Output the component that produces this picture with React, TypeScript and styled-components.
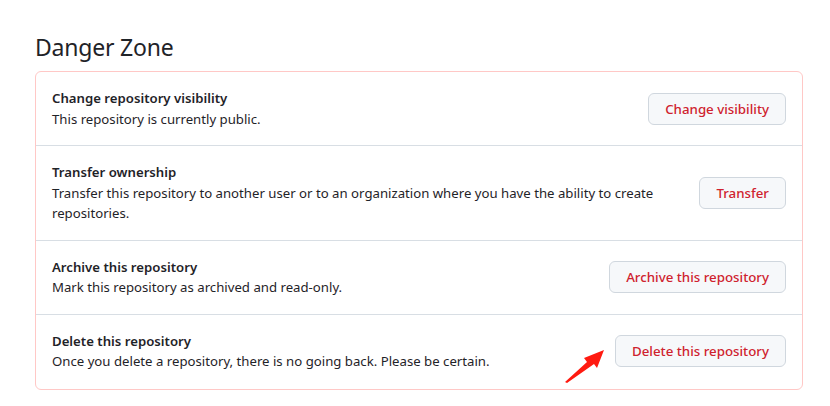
import styled, { createGlobalStyle } from 'styled-components';

const GlobalStyle = createGlobalStyle`
  html, body {
    margin: 0;
    background: #ffffff;
  }
  body {
    font-family: 'Noto Sans', 'Liberation Sans', sans-serif;
    color: #1f2328;
  }
`;

interface Setting {
  title: string;
  description: string;
  action: string;
}

const settings: Setting[] = [
  {
    title: 'Change repository visibility',
    description: 'This repository is currently public.',
    action: 'Change visibility',
  },
  {
    title: 'Transfer ownership',
    description:
      'Transfer this repository to another user or to an organization where you have the ability to create repositories.',
    action: 'Transfer',
  },
  {
    title: 'Archive this repository',
    description: 'Mark this repository as archived and read-only.',
    action: 'Archive this repository',
  },
  {
    title: 'Delete this repository',
    description:
      'Once you delete a repository, there is no going back. Please be certain.',
    action: 'Delete this repository',
  },
];

const Page = styled.div`
  padding: 29px 27px 16px 35px;
`;

const Heading = styled.h2`
  margin: 0 0 6px;
  font-size: 23px;
  font-weight: 400;
  line-height: 36px;
  letter-spacing: -0.2px;
`;

const Box = styled.div`
  position: relative;
  border: 1px solid #ffc8c6;
  border-radius: 6px;
`;

const Row = styled.div`
  display: flex;
  align-items: center;
  justify-content: space-between;
  gap: 16px;
  padding: 16px;

  & + & {
    border-top: 1px solid #d8dee4;
  }

  &:last-of-type {
    padding-bottom: 17px;
  }
`;

const Info = styled.div`
  flex: 1;
  max-width: 620px;
  font-size: 13.2px;
  line-height: 20.5px;
`;

const Title = styled.div`
  font-weight: 600;
`;

const Description = styled.div``;

const DangerButton = styled.button`
  flex-shrink: 0;
  height: 32px;
  padding: 0 16px;
  font-family: inherit;
  font-size: 13.3px;
  font-weight: 500;
  color: #cf222e;
  background: #f6f8fa;
  border: 1px solid #d0d7de;
  border-radius: 6px;
  cursor: pointer;
`;

const Arrow = styled.svg`
  position: absolute;
  left: 528px;
  bottom: 5px;
  width: 42px;
  height: 36px;
`;

export default function App() {
  return (
    <>
      <GlobalStyle />
      <Page>
        <Heading>Danger Zone</Heading>
        <Box>
          {settings.map((setting) => (
            <Row key={setting.title}>
              <Info>
                <Title>{setting.title}</Title>
                <Description>{setting.description}</Description>
              </Info>
              <DangerButton>{setting.action}</DangerButton>
            </Row>
          ))}
          <Arrow viewBox="0 0 42 36">
            <path d="M1 34 L23 14 L20 10 L40 2 L33 20 L30 16 L3 35 Z" fill="#ff1a10" />
          </Arrow>
        </Box>
      </Page>
    </>
  );
}
